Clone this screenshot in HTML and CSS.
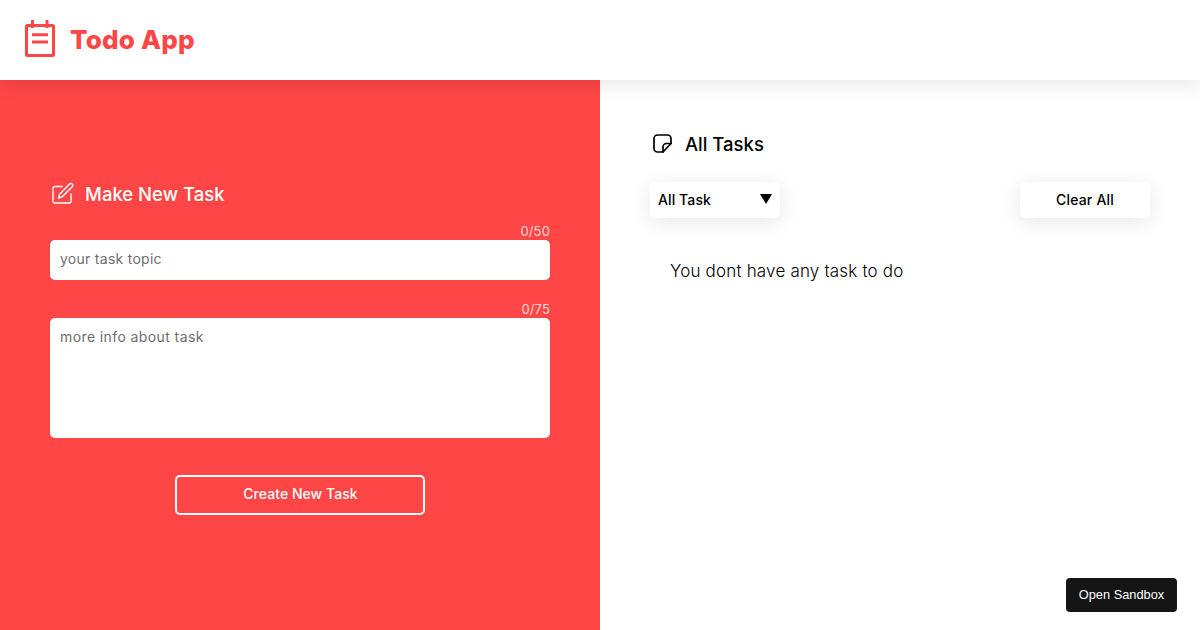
FILE: index.html
```html
<!DOCTYPE html>
<html lang="en">
<head>
<meta charset="utf-8">
<title>Todo App</title>
<link rel="stylesheet" href="styles.css">
</head>
<body>
<header class="header">
  <svg class="logo" width="36" height="40" viewBox="0 0 36 40" fill="none" stroke="#ff4646" stroke-width="3">
    <rect x="4.5" y="5.5" width="27" height="30" rx="1"/>
    <path d="M10.5 0V8M25 0V8M10 14.7H26M10 22H26"/>
  </svg>
  <h1 class="brand">Todo App</h1>
</header>
<main class="main">
  <section class="left">
    <form class="form">
      <h2 class="title title-light">
        <svg class="title-icon" width="24" height="24" viewBox="0 0 24 24" fill="none" stroke="#fff" stroke-width="1.4" stroke-linecap="round" stroke-linejoin="round">
          <path d="M12 4.5H5a2 2 0 0 0-2 2V19a2 2 0 0 0 2 2h14a2 2 0 0 0 2-2v-7"/>
          <path d="M19.5 2a1.9 1.9 0 0 1 2.7 2.7L12 15l-3.500 1 1-3.500z"/>
        </svg>
        Make New Task
      </h2>
      <div class="count count-first">0/50</div>
      <input class="field field-input" type="text" placeholder="your task topic">
      <div class="count count-second">0/75</div>
      <textarea class="field field-area" placeholder="more info about task"></textarea>
      <button class="create" type="button">Create New Task</button>
    </form>
  </section>
  <section class="right">
    <h2 class="title title-dark">
      <svg class="title-icon" width="24" height="24" viewBox="0 0 24 24" fill="none" stroke="#000" stroke-width="1.7" stroke-linecap="round" stroke-linejoin="round">
        <path d="M21 11.5V6.5A3.5 3.5 0 0 0 17.500 3H7.500A3.500 3.500 0 0 0 4 6.500v10A3.500 3.500 0 0 0 7.500 20H13z"/>
        <path d="M21 11.5h-4.500a3.500 3.500 0 0 0-3.500 3.500v5"/>
      </svg>
      All Tasks
    </h2>
    <div class="controls">
      <div class="select"><span>All Task</span><span class="arrow"></span></div>
      <button class="clear" type="button">Clear All</button>
    </div>
    <p class="empty">You dont have any task to do</p>
  </section>
</main>
<a class="sandbox">Open Sandbox</a>
</body>
</html>
```
FILE: styles.css
```css
* { box-sizing: border-box; }
html, body { margin: 0; height: 100%; }
body {
  width: 1200px;
  height: 630px;
  overflow: hidden;
  background: #fff;
  font-family: "Inter", "Open Sans", sans-serif;
  position: relative;
}
.header {
  height: 80px;
  display: flex;
  align-items: center;
  gap: 12px;
  padding-left: 22px;
  background: #fff;
  box-shadow: 0 4px 20px rgba(0, 0, 0, .1);
  position: relative;
  z-index: 1;
}
.logo { display: block; }
.brand {
  margin: -2px 0 0;
  color: #ff4646;
  font-size: 26px;
  font-weight: 800;
  letter-spacing: .2px;
}
.main { display: flex; height: 550px; }
.left {
  width: 600px;
  background: #ff4646;
  padding: 101px 50px 0;
}
.right { width: 600px; padding: 51px 50px 0; }
.title {
  margin: 0;
  height: 26px;
  display: flex;
  align-items: center;
  gap: 11px;
  font-size: 18.5px;
  font-weight: 500;
}
.title-light { color: #fff; }
.title-dark { color: #000; }
.title-icon { display: block; width: 24px; height: 24px; }
.count {
  text-align: right;
  color: rgba(255, 255, 255, .8);
  font-size: 13px;
  line-height: 18px;
  letter-spacing: .15px;
}
.count-first { margin-top: 15px; height: 18px; }
.count-second { margin-top: 20px; height: 18px; }
.field {
  display: block;
  width: 500px;
  border: 0;
  border-radius: 5px;
  background: #fff;
  padding: 8px 10px 12px;
  font-family: inherit;
  font-size: 14px;
  line-height: 18px;
  resize: none;
  outline: 0;
}
.field::placeholder { color: #6e6e6e; opacity: 1; }
.field-input { height: 40px; letter-spacing: .27px; }
.field-area { height: 120px; padding-top: 10px; letter-spacing: .4px; }
.create {
  display: block;
  width: 250px;
  height: 40px;
  margin: 37px auto 0;
  padding: 0 0 3px 1px;
  border: 2px solid #fff;
  border-radius: 5px;
  background: transparent;
  color: #fff;
  font-family: inherit;
  font-size: 14px;
  font-weight: 500;
  letter-spacing: .05px;
}
.controls {
  display: flex;
  justify-content: space-between;
  margin-top: 25px;
}
.select, .clear {
  height: 36px;
  background: #fff;
  border: 0;
  border-radius: 5px;
  box-shadow: 0 4px 20px rgba(0, 0, 0, .1);
  color: #000;
  font-family: inherit;
  font-size: 14px;
  font-weight: 500;
  letter-spacing: .1px;
}
.select {
  width: 130px;
  padding: 0 8px 2px;
  display: flex;
  align-items: center;
  justify-content: space-between;
}
.arrow {
  width: 0;
  height: 0;
  border-left: 6px solid transparent;
  border-right: 6px solid transparent;
  border-top: 10px solid #000;
}
.clear { width: 130px; padding: 0 0 2px; letter-spacing: .2px; }
.empty {
  margin: 41px 0 0 20px;
  font-size: 17px;
  line-height: 24px;
  font-weight: 300;
  letter-spacing: .18px;
  color: #000;
}
.sandbox {
  position: absolute;
  left: 1066px;
  top: 578px;
  width: 111px;
  height: 34px;
  border-radius: 4px;
  background: #151515;
  color: #fff;
  font-family: "Liberation Sans", Arial, sans-serif;
  font-size: 12.8px;
  line-height: 34px;
  text-align: center;
}
```
